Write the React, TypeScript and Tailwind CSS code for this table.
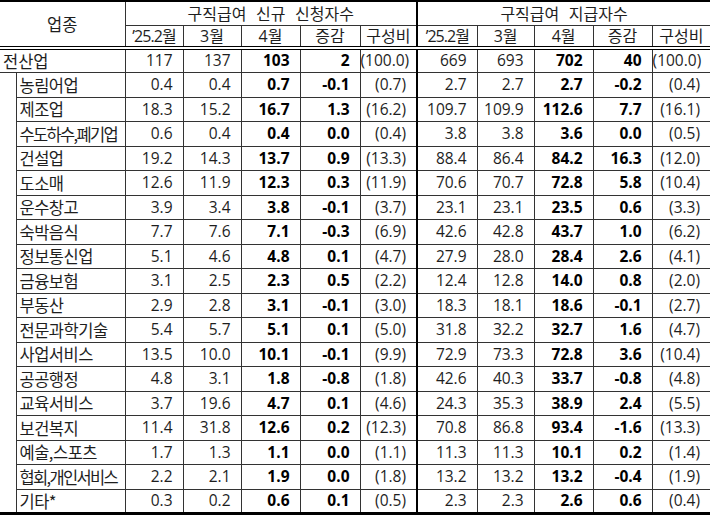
import React from 'react';

type Row = [string, ...string[]];

const rows: Row[] = [
  ['농림어업', '0.4', '0.4', '0.7', '-0.1', '(0.7)', '2.7', '2.7', '2.7', '-0.2', '(0.4)'],
  ['제조업', '18.3', '15.2', '16.7', '1.3', '(16.2)', '109.7', '109.9', '112.6', '7.7', '(16.1)'],
  ['수도하수,폐기업', '0.6', '0.4', '0.4', '0.0', '(0.4)', '3.8', '3.8', '3.6', '0.0', '(0.5)'],
  ['건설업', '19.2', '14.3', '13.7', '0.9', '(13.3)', '88.4', '86.4', '84.2', '16.3', '(12.0)'],
  ['도소매', '12.6', '11.9', '12.3', '0.3', '(11.9)', '70.6', '70.7', '72.8', '5.8', '(10.4)'],
  ['운수창고', '3.9', '3.4', '3.8', '-0.1', '(3.7)', '23.1', '23.1', '23.5', '0.6', '(3.3)'],
  ['숙박음식', '7.7', '7.6', '7.1', '-0.3', '(6.9)', '42.6', '42.8', '43.7', '1.0', '(6.2)'],
  ['정보통신업', '5.1', '4.6', '4.8', '0.1', '(4.7)', '27.9', '28.0', '28.4', '2.6', '(4.1)'],
  ['금융보험', '3.1', '2.5', '2.3', '0.5', '(2.2)', '12.4', '12.8', '14.0', '0.8', '(2.0)'],
  ['부동산', '2.9', '2.8', '3.1', '-0.1', '(3.0)', '18.3', '18.1', '18.6', '-0.1', '(2.7)'],
  ['전문과학기술', '5.4', '5.7', '5.1', '0.1', '(5.0)', '31.8', '32.2', '32.7', '1.6', '(4.7)'],
  ['사업서비스', '13.5', '10.0', '10.1', '-0.1', '(9.9)', '72.9', '73.3', '72.8', '3.6', '(10.4)'],
  ['공공행정', '4.8', '3.1', '1.8', '-0.8', '(1.8)', '42.6', '40.3', '33.7', '-0.8', '(4.8)'],
  ['교육서비스', '3.7', '19.6', '4.7', '0.1', '(4.6)', '24.3', '35.3', '38.9', '2.4', '(5.5)'],
  ['보건복지', '11.4', '31.8', '12.6', '0.2', '(12.3)', '70.8', '86.8', '93.4', '-1.6', '(13.3)'],
  ['예술,스포츠', '1.7', '1.3', '1.1', '0.0', '(1.1)', '11.3', '11.3', '10.1', '0.2', '(1.4)'],
  ['협회,개인서비스', '2.2', '2.1', '1.9', '0.0', '(1.8)', '13.2', '13.2', '13.2', '-0.4', '(1.9)'],
  ['기타*', '0.3', '0.2', '0.6', '0.1', '(0.5)', '2.3', '2.3', '2.6', '0.6', '(0.4)'],
];

const total = ['117', '137', '103', '2', '(100.0)', '669', '693', '702', '40', '(100.0)'];

const subHeads = ['’25.2월', '3월', '4월', '증감', '구성비'];

// value cells: index 2,3 and 7,8 are bold (4월, 증감)
const ValueCells = ({ values }: { values: string[] }) => (
  <>
    {values.map((v, i) => (
      <td
        key={i}
        className={`border border-[#333] pr-[10px] text-right whitespace-nowrap ${
          i === 2 || i === 3 || i === 7 || i === 8 ? 'font-bold text-black' : ''
        } ${i === 4 ? 'border-r-2 border-r-black' : ''} ${i === 9 ? 'border-r-0' : ''}`}
      >
        {v}
      </td>
    ))}
  </>
);

export default function App() {
  return (
    <div className="w-[710px] h-[517px] bg-white overflow-hidden">
      <table
        className="table-fixed border-collapse w-[710px] text-[15.5px] leading-none text-[#1e1e1e] border-t-2 border-b-[3px] border-black"
        style={{ fontFamily: '"Open Sans", "Noto Sans CJK KR", sans-serif' }}
      >
        <colgroup>
          <col className="w-[16px]" />
          <col className="w-[109px]" />
          <col className="w-[58px]" />
          <col className="w-[58px]" />
          <col className="w-[59px]" />
          <col className="w-[60px]" />
          <col className="w-[57px]" />
          <col className="w-[60px]" />
          <col className="w-[57px]" />
          <col className="w-[59px]" />
          <col className="w-[59px]" />
          <col className="w-[58px]" />
        </colgroup>
        <thead>
          <tr className="h-[24px]">
            <th
              rowSpan={2}
              colSpan={2}
              className="font-normal text-[16.5px] border-r border-[#333] border-b-4 border-b-black border-double [font-family:'Noto_Sans_CJK_KR',sans-serif]"
            >
              업종
            </th>
            <th
              colSpan={5}
              className="font-normal text-[16px] border border-[#333] border-t-0 border-r-2 border-r-black [word-spacing:6px] [font-family:'Noto_Sans_CJK_KR',sans-serif]"
            >
              구직급여 신규 신청자수
            </th>
            <th
              colSpan={5}
              className="font-normal text-[16px] border-b border-[#333] [word-spacing:6px] [font-family:'Noto_Sans_CJK_KR',sans-serif]"
            >
              구직급여 지급자수
            </th>
          </tr>
          <tr className="h-[23px]">
            {[0, 1].map((g) =>
              subHeads.map((h, i) => (
                <th
                  key={`${g}-${i}`}
                  className={`font-normal text-[16px] border border-[#333] border-b-4 border-b-black border-double whitespace-nowrap ${
                    i === 0 ? 'tracking-[-0.06em]' : ''
                  } ${g === 0 && i === 4 ? 'border-r-2 border-r-black' : ''} ${
                    g === 1 && i === 4 ? 'border-r-0' : ''
                  }`}
                >
                  {h}
                </th>
              ))
            )}
          </tr>
        </thead>
        <tbody>
          <tr className="h-[24.5px]">
            <td
              colSpan={2}
              className="border-b border-r border-[#333] pl-[3px] whitespace-nowrap text-[16.5px] [font-family:'Noto_Sans_CJK_KR',sans-serif]"
            >
              전산업
            </td>
            <ValueCells values={total} />
          </tr>
          {rows.map(([label, ...vals], r) => (
            <tr key={label} className="h-[24.5px]">
              {r === 0 && <td rowSpan={rows.length} className="border-r border-[#333]" />}
              <td
                className={`border border-[#333] pl-[3px] whitespace-nowrap text-[16.5px] [font-family:'Noto_Sans_CJK_KR',sans-serif] ${
                  label.length > 6 ? 'tracking-[-0.1em]' : 'tracking-[-0.03em]'
                }`}
              >
                {label}
              </td>
              <ValueCells values={vals} />
            </tr>
          ))}
        </tbody>
      </table>
    </div>
  );
}
